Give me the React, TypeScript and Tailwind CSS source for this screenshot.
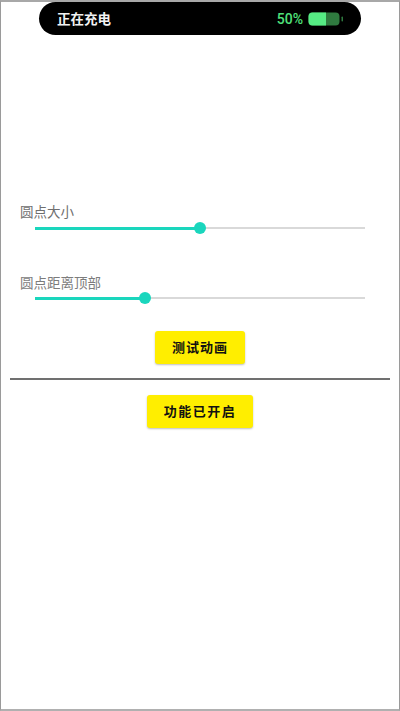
export default function App() {
  return (
    <div className="h-[711px] w-[400px] overflow-hidden border-x border-t-2 border-b-2 border-x-[#9a9a9a] border-t-[#a8a8a8] border-b-[#b0b0b0] bg-white font-['Noto_Sans_CJK_SC',sans-serif]">
      <div className="ml-[38px] flex h-[33px] w-[322px] items-center rounded-[17px] bg-black pl-[18px] pr-[17px]">
        <span className="text-[13.5px] font-bold leading-none text-[#f2f2f2]">正在充电</span>
        <span className="ml-auto font-['Roboto',sans-serif] text-sm font-medium leading-none text-[#4fe07a]">50%</span>
        <svg className="ml-[5px]" width="36" height="14" viewBox="0 0 36 14">
          <rect x="0.5" y="0.5" width="31" height="13" rx="4" fill="#2f7a3f" />
          <path d="M4.5 0.5h13.5v13H4.5a4 4 0 0 1-4-4v-5a4 4 0 0 1 4-4z" fill="#56ec84" />
          <rect x="33.5" y="4.5" width="1.5" height="5" rx="0.7" fill="#2f7a3f" />
        </svg>
      </div>

      <div className="mt-[169px] pl-[19px] text-[13.5px] leading-[14px] text-[#6f6f6f]">圆点大小</div>
      <div className="ml-[34px] mt-[4px] flex h-3 w-[330px] items-center">
        <div className="h-[3px] w-[165px] bg-[#1ad6bd]" />
        <div className="-mx-[6px] z-10 size-3 rounded-full bg-[#1ad6bd]" />
        <div className="h-[2px] flex-1 bg-[#d9d9d9]" />
      </div>

      <div className="mt-[41px] pl-[19px] text-[13.5px] leading-[14px] text-[#7c7c7c]">圆点距离顶部</div>
      <div className="ml-[34px] mt-[3px] flex h-3 w-[330px] items-center">
        <div className="h-[3px] w-[110px] bg-[#1ad6bd]" />
        <div className="-mx-[6px] z-10 size-3 rounded-full bg-[#1ad6bd]" />
        <div className="h-[2px] flex-1 bg-[#d9d9d9]" />
      </div>

      <div className="mt-[27px] flex justify-center">
        <button className="h-[33px] w-[90px] rounded-[3px] bg-[#ffee00] pb-[2px] text-[13px] font-bold tracking-[1px] text-[#111] shadow-[0_1px_2px_rgba(0,0,0,0.25)]">测试动画</button>
      </div>
      <div className="ml-[9px] mt-[14px] h-[2px] w-[380px] bg-[#707070]" />
      <div className="mt-[15px] flex justify-center">
        <button className="h-[33px] w-[106px] rounded-[3px] bg-[#ffee00] pb-[2px] text-[13px] font-bold tracking-[1.5px] text-[#111] shadow-[0_1px_2px_rgba(0,0,0,0.25)]">功能已开启</button>
      </div>
    </div>
  );
}
